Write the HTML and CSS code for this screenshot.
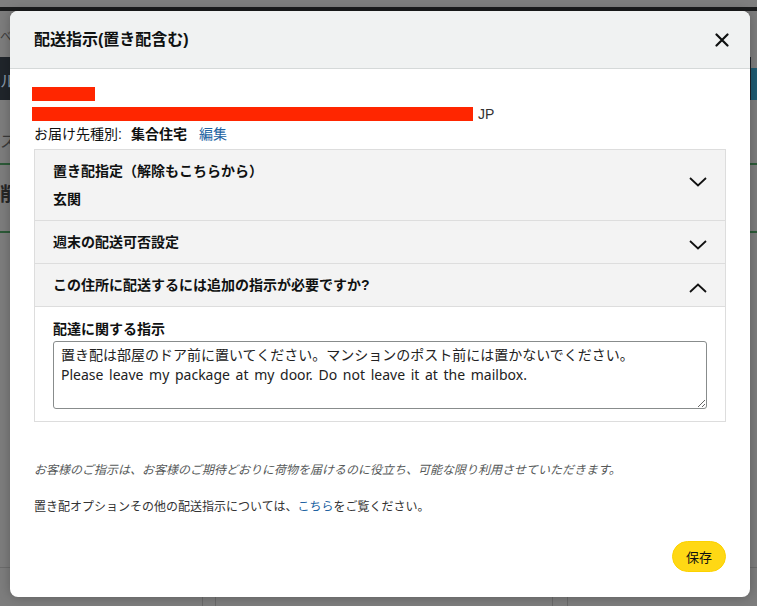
FILE: index.html
```html
<!DOCTYPE html>
<html lang="ja">

<head>
    <meta charset="UTF-8">
    <title>配送指示(置き配含む)</title>
    <link rel="stylesheet" href="styles.css">
</head>

<body>
    <!-- 背景のページ（モーダルの後ろで暗くなっている） -->
    <div class="page">
        <div class="page-nav"></div>
        <div class="page-sub"><span>べ</span></div>
        <div class="page-band">
            <span class="band-dark">ル</span>
            <span class="band-blue"></span>
        </div>
        <div class="page-row"><span>ス</span></div>
        <div class="page-sec"><span>削</span></div>
        <div class="page-rest"></div>
        <div class="page-foot">
            <span class="foot-cell foot-a"></span>
            <span class="foot-cell foot-b"></span>
            <span class="foot-cell foot-c"></span>
        </div>
    </div>

    <div class="modal">
        <div class="modal-head">
            <h1 class="modal-title">配送指示(置き配含む)</h1>
            <span class="close">
                <svg width="14" height="14" viewBox="0 0 14 14">
                    <path d="M1.5 1.5 L12.5 12.5 M12.5 1.5 L1.5 12.5" stroke="#0f1111" stroke-width="2.2" stroke-linecap="round" fill="none" />
                </svg>
            </span>
        </div>

        <div class="modal-body">
            <div class="addr">
                <div class="addr-line"><span class="redact redact1"></span></div>
                <div class="addr-line"><span class="redact redact2"></span><span class="jp">JP</span></div>
                <div class="addr-line">
                    <span class="addr-label">お届け先種別:</span>
                    <b class="addr-type">集合住宅</b>
                    <a class="link" href="#">編集</a>
                </div>
            </div>

            <div class="acc">
                <div class="acc-sec">
                    <div class="acc-head">
                        <div class="acc-text">
                            <div class="acc-title">置き配指定（解除もこちらから）</div>
                            <div class="acc-value">玄関</div>
                        </div>
                        <svg class="chev chev-up1" width="18" height="10" viewBox="0 0 18 10">
                            <path d="M1 1 L9 8.5 L17 1" stroke="#111" stroke-width="1.8" fill="none" />
                        </svg>
                    </div>
                </div>
                <div class="acc-sec">
                    <div class="acc-head">
                        <div class="acc-title">週末の配送可否設定</div>
                        <svg class="chev chev-low" width="18" height="10" viewBox="0 0 18 10">
                            <path d="M1 1 L9 8.5 L17 1" stroke="#111" stroke-width="1.8" fill="none" />
                        </svg>
                    </div>
                </div>
                <div class="acc-sec">
                    <div class="acc-head">
                        <div class="acc-title">この住所に配送するには追加の指示が必要ですか?</div>
                        <svg class="chev chev-low" width="18" height="10" viewBox="0 0 18 10">
                            <path d="M1 9 L9 1.5 L17 9" stroke="#111" stroke-width="1.8" fill="none" />
                        </svg>
                    </div>
                    <div class="acc-body">
                        <div class="field-label">配達に関する指示</div>
                        <textarea class="field">置き配は部屋のドア前に置いてください。マンションのポスト前には置かないでください。
Please leave my package at my door. Do not leave it at the mailbox.</textarea>
                    </div>
                </div>
            </div>

            <p class="note">お客様のご指示は、お客様のご期待どおりに荷物を届けるのに役立ち、可能な限り利用させていただきます。</p>
            <p class="more">置き配オプションその他の配送指示については、<a class="link" href="#">こちら</a>をご覧ください。</p>

            <div class="actions">
                <button class="save">保存</button>
            </div>
        </div>
    </div>
</body>

</html>
```

FILE: styles.css
```css
* {
    margin: 0;
    padding: 0;
    box-sizing: border-box;
}

html,
body {
    width: 757px;
    height: 606px;
    overflow: hidden;
}

body {
    background: #7d7d7d;
    font-family: "Liberation Sans", "Noto Sans CJK JP", sans-serif;
    font-size: 14px;
    color: #0f1111;
    position: relative;
}

/* 背景ページ */
.page {
    display: flex;
    flex-direction: column;
    height: 606px;
    color: #2b2b2b;
}

.page-nav {
    height: 11px;
    border-top: 7px solid #7f7f7f;
    background: #1b1c1d;
}

.page-sub {
    height: 46px;
    padding: 16px 0 0 0;
    font-size: 12px;
    color: #3a3a3a;
}

.page-band {
    height: 43px;
    display: flex;
}

.band-dark {
    flex: 1;
    background: #20252b;
    color: #8a98a8;
    font-size: 16px;
    padding-top: 11px;
}

.band-blue {
    width: 6px;
    margin-top: 11px;
    background: #1e5b72;
}

.page-row {
    height: 65px;
    padding-top: 28px;
    font-size: 16px;
    color: #3a3a3a;
    border-bottom: 2px solid #2c5a38;
}

.page-sec {
    height: 68px;
    padding-top: 14px;
    font-size: 19px;
    font-weight: bold;
    color: #262626;
    border-bottom: 2px solid #2c5a38;
}

.page-rest {
    height: 335px;
    border-bottom: 1px solid #6c6c6c;
}

.page-foot {
    flex: 1;
    display: flex;
}

.foot-cell {
    height: 100%;
}

.foot-a {
    width: 203px;
    border-right: 1px solid #6a6a6a;
}

.foot-b {
    width: 338px;
    margin-left: 12px;
    border-left: 1px solid #6a6a6a;
    border-right: 1px solid #6a6a6a;
}

.foot-c {
    margin-left: 14px;
    border-left: 1px solid #6a6a6a;
}

/* モーダル */
.modal {
    position: absolute;
    left: 10px;
    top: 11px;
    width: 740px;
    height: 586px;
    background: #fff;
    border-radius: 8px;
    overflow: hidden;
    display: flex;
    flex-direction: column;
    box-shadow: 0 0 12px rgba(0, 0, 0, 0.25);
}

.modal-head {
    height: 58px;
    background: #f0f2f2;
    border-bottom: 1px solid #d5d9d9;
    display: flex;
    align-items: center;
    justify-content: space-between;
    padding: 0 21px 0 24px;
}

.modal-title {
    font-size: 16px;
    font-weight: bold;
    line-height: 24px;
}

.close {
    display: flex;
}

.modal-body {
    flex: 1;
    padding: 15px 24px 25px;
    display: flex;
    flex-direction: column;
}

.addr-line {
    height: 20px;
    line-height: 20px;
    display: flex;
    align-items: center;
}

.redact {
    display: block;
    background: #ff2600;
    height: 14px;
}

.redact1 {
    width: 63px;
    margin-left: -2px;
}

.redact2 {
    width: 441px;
    margin-left: -2px;
}

.jp {
    margin-left: 5px;
    color: #333;
}

.addr-label {
    margin-right: 9px;
}

.addr-type {
    margin-right: 12px;
}

.link {
    color: #2162a1;
    text-decoration: none;
}

/* アコーディオン */
.acc {
    margin-top: 5px;
    border: 1px solid #dddddd;
}

.acc-sec + .acc-sec {
    border-top: 1px solid #dddddd;
}

.acc-head {
    background: #f3f3f3;
    padding: 11px 18px;
    display: flex;
    justify-content: space-between;
}

.acc-title,
.acc-value {
    font-weight: bold;
    line-height: 20px;
}

.acc-value {
    margin-top: 8px;
}

.chev {
    align-self: center;
    flex-shrink: 0;
}

.chev-up1 {
    margin-bottom: 6px;
}

.chev-low {
    margin-top: 5px;
}

.acc-body {
    border-top: 1px solid #dddddd;
    padding: 12px 18px 12px;
}

.field-label {
    font-weight: bold;
    line-height: 20px;
    margin-bottom: 2px;
}

.field {
    display: block;
    width: 100%;
    height: 68px;
    border: 1px solid #888c8c;
    border-radius: 3px;
    padding: 3px 7px;
    font-family: "Noto Sans", "Noto Sans CJK JP", sans-serif;
    font-size: 14px;
    line-height: 20px;
    word-spacing: 2px;
    color: #222;
    resize: vertical;
}

/* 注意書き */
.note {
    margin-top: 39px;
    font-size: 12px;
    line-height: 18px;
    font-style: italic;
    color: #565959;
}

.more {
    margin-top: 19px;
    font-size: 12px;
    line-height: 18px;
    color: #333;
}

.actions {
    margin-top: auto;
    display: flex;
    justify-content: flex-end;
}

.save {
    height: 31px;
    padding: 0 13px;
    border: 1px solid #fcd200;
    border-radius: 100px;
    background: #ffd814;
    font-family: "Liberation Sans", "Noto Sans CJK JP", sans-serif;
    font-size: 13px;
    color: #0f1111;
}
```
